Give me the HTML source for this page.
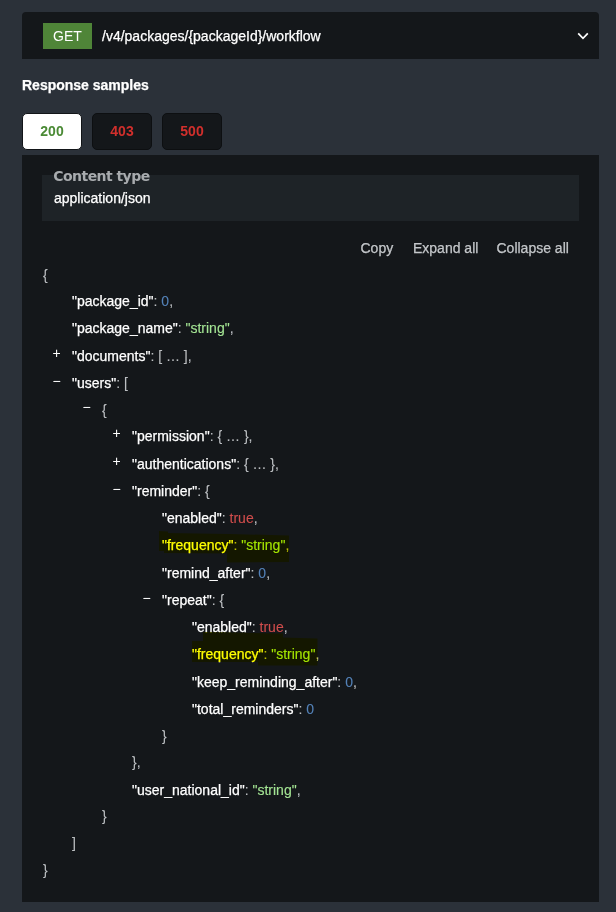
<!DOCTYPE html>
<html><head><meta charset="utf-8"><title>Response samples</title>
<style>
html,body{margin:0;padding:0}
body{width:616px;height:912px;background:#2b3139;position:relative;overflow:hidden;font-family:"Liberation Sans",Arial,sans-serif;font-size:14px;color:#fff;-webkit-text-stroke:0.25px}
.abs{position:absolute}
.op{left:22px;top:12px;width:577px;height:47px;background:#14171a;border-radius:4px 4px 0 0}
.get{left:43px;top:23px;width:49px;height:26px;background:#4f8538;color:#fff;font-size:14px;line-height:26px;text-align:center;-webkit-text-stroke:0}
.path{left:102px;top:26px;line-height:20px;font-size:14px;color:#fff;white-space:nowrap}
.h{left:22px;top:75px;line-height:20px;font-weight:bold;font-size:14px;color:#fff;white-space:nowrap}
.tab{top:113px;width:58px;height:35px;border:1px solid #0d0f11;border-radius:5px;background:#14171a;text-align:center;line-height:35px;font-weight:bold;font-size:14px;color:#d12f2c;-webkit-text-stroke:0}
.tab.on{background:#fff;border-color:#121518;color:#4a8a35}
.panel{left:22px;top:155px;width:577px;height:747px;background:#14171a}
.ct{left:42px;top:175px;width:537px;height:46px;background:#1e2327}
.ctl{left:53.3px;top:166px;line-height:20px;font-family:"DejaVu Sans","Liberation Sans",sans-serif;font-weight:bold;font-size:14px;letter-spacing:-0.55px;color:#a8abae;white-space:nowrap;-webkit-text-stroke:0}
.ctv{left:54px;top:188px;line-height:20px;font-size:14px;color:#fff;white-space:nowrap}
.btn{top:238px;line-height:20px;font-size:14px;color:#c4c7ca;white-space:nowrap}
.ln{position:absolute;line-height:20px;height:20px;font-size:14px;white-space:nowrap;color:#c4c7ca}
.tg{position:absolute;line-height:20px;font-size:14px;color:#fff;width:15px;text-align:center;-webkit-text-stroke:0}
.k{color:#fff}.p{color:#bcbfc2;-webkit-text-stroke:0.1px}.s{color:#a4e594;-webkit-text-stroke:0.1px}.n{color:#5482b8;-webkit-text-stroke:0.1px}.b{color:#d04d4c;-webkit-text-stroke:0.1px}
.hls{position:absolute;left:0;top:0;mix-blend-mode:multiply;pointer-events:none}
</style></head><body>
<div class="abs op"></div>
<div class="abs get">GET</div>
<div class="abs path">/v4/packages/{packageId}/workflow</div>
<svg class="abs" style="left:570px;top:26px" width="24" height="20" viewBox="570 26 24 20"><polyline points="578.2,33.3 583,38.3 587.8,33.3" fill="none" stroke="#fff" stroke-width="1.7"/></svg>
<div class="abs h">Response samples</div>
<div class="abs tab on" style="left:22px">200</div>
<div class="abs tab" style="left:92px">403</div>
<div class="abs tab" style="left:162px">500</div>
<div class="abs panel"></div>
<div class="abs ct"></div>
<div class="abs ctl">Content type</div>
<div class="abs ctv">application/json</div>
<div class="abs btn" style="left:360.5px">Copy</div>
<div class="abs btn" style="left:413px">Expand all</div>
<div class="abs btn" style="left:496.5px">Collapse all</div>
<div class="ln" style="left:43px;top:265px"><span class="p">{</span></div>
<div class="ln" style="left:72px;top:291px"><span class="k">"package_id"</span><span class="p">: </span><span class="n">0</span><span class="p">,</span></div>
<div class="ln" style="left:72px;top:318px"><span class="k">"package_name"</span><span class="p">: </span><span class="s">"string"</span><span class="p">,</span></div>
<div class="tg" style="left:49px;top:343px">+</div>
<div class="ln" style="left:72px;top:346px"><span class="k">"documents"</span><span class="p">: [ … ],</span></div>
<div class="tg" style="left:49px;top:371px">−</div>
<div class="ln" style="left:72px;top:373px"><span class="k">"users"</span><span class="p">: [</span></div>
<div class="tg" style="left:79px;top:397px">−</div>
<div class="ln" style="left:102px;top:400px"><span class="p">{</span></div>
<div class="tg" style="left:109px;top:423px">+</div>
<div class="ln" style="left:132px;top:426px"><span class="k">"permission"</span><span class="p">: { … },</span></div>
<div class="tg" style="left:109px;top:451px">+</div>
<div class="ln" style="left:132px;top:454px"><span class="k">"authentications"</span><span class="p">: { … },</span></div>
<div class="tg" style="left:109px;top:479px">−</div>
<div class="ln" style="left:132px;top:481px"><span class="k">"reminder"</span><span class="p">: {</span></div>
<div class="ln" style="left:162px;top:508px"><span class="k">"enabled"</span><span class="p">: </span><span class="b">true</span><span class="p">,</span></div>
<div class="ln" style="left:162px;top:535px"><span class="k">"frequency"</span><span class="p">: </span><span class="s">"string"</span><span class="p">,</span></div>
<div class="ln" style="left:162px;top:563px"><span class="k">"remind_after"</span><span class="p">: </span><span class="n">0</span><span class="p">,</span></div>
<div class="tg" style="left:139px;top:588px">−</div>
<div class="ln" style="left:162px;top:590px"><span class="k">"repeat"</span><span class="p">: {</span></div>
<div class="ln" style="left:192px;top:617px"><span class="k">"enabled"</span><span class="p">: </span><span class="b">true</span><span class="p">,</span></div>
<div class="ln" style="left:192px;top:644px"><span class="k">"frequency"</span><span class="p">: </span><span class="s">"string"</span><span class="p">,</span></div>
<div class="ln" style="left:192px;top:672px"><span class="k">"keep_reminding_after"</span><span class="p">: </span><span class="n">0</span><span class="p">,</span></div>
<div class="ln" style="left:192px;top:699px"><span class="k">"total_reminders"</span><span class="p">: </span><span class="n">0</span></div>
<div class="ln" style="left:162px;top:726px"><span class="p">}</span></div>
<div class="ln" style="left:132px;top:752px"><span class="p">},</span></div>
<div class="ln" style="left:132px;top:780px"><span class="k">"user_national_id"</span><span class="p">: </span><span class="s">"string"</span><span class="p">,</span></div>
<div class="ln" style="left:102px;top:806px"><span class="p">}</span></div>
<div class="ln" style="left:72px;top:833px"><span class="p">]</span></div>
<div class="ln" style="left:43px;top:860px"><span class="p">}</span></div>
<svg class="hls" width="616" height="912" viewBox="0 0 616 912">
<polygon fill="#ffff00" points="159,531 168,531.5 168,533 230,534 289,535.5 289,562 227,562.5 227,553.5 164,553 164,551 159,551"/>
<polygon fill="#ffff00" points="192,641 203,641 203,632 283,633.5 283,637.5 317.5,638.5 317.5,665.5 258,665.5 258,662 192,662"/>
</svg>
</body></html>
